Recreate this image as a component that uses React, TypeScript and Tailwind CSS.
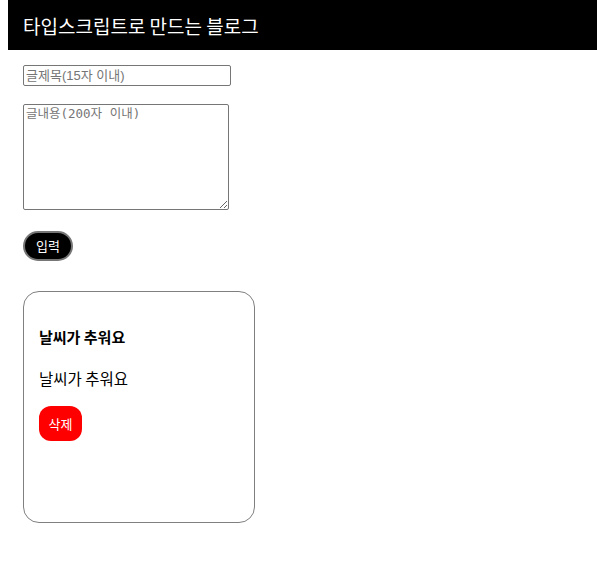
import React from "react";

const posts = [{ id: 1, title: "날씨가 추워요", content: "날씨가 추워요" }];

const App = () => {
  return (
    <div className="pl-2 font-['Noto_Sans_CJK_KR',sans-serif] bg-white min-h-[562px]">
      <header className="h-[50px] bg-black flex items-center px-[15px]">
        <h1 className="text-[19px] text-white leading-none">
          타입스크립트로 만드는 블로그
        </h1>
      </header>
      <main className="px-[15px]">
        <input
          className="block mt-[15px] w-[208px] h-[21px] border border-[#767676] rounded-[2px] px-[2px] text-[13px] font-['Liberation_Sans','Noto_Sans_CJK_KR',sans-serif] placeholder:text-[#757575]"
          placeholder="글제목(15자 이내)"
        />
        <textarea
          className="block mt-[18px] w-[206px] h-[106px] border border-[#767676] rounded-[2px] px-[2px] text-[12.5px] font-['DejaVu_Sans_Mono','Noto_Sans_CJK_KR',monospace] placeholder:text-[#757575]"
          placeholder="글내용(200자 이내)"
        />
        <button className="block mt-[21px] w-[50px] h-[30px] rounded-full bg-black text-white text-[13px] border-2 border-[#767676]">
          입력
        </button>
        <div className="mt-[30px] flex gap-4">
          {posts.map((post) => (
            <div
              key={post.id}
              className="w-[232px] h-[232px] border border-[#808080] rounded-[16px] px-[15px] pt-[35px]"
            >
              <h3 className="text-[15px] font-bold leading-[20px]">{post.title}</h3>
              <p className="mt-[20px] text-[15.5px] leading-[22px]">{post.content}</p>
              <button className="mt-[17px] w-[43px] h-[35px] rounded-[12px] bg-[#ff0000] text-white text-[13px]">
                삭제
              </button>
            </div>
          ))}
        </div>
      </main>
    </div>
  );
};

export default App;
